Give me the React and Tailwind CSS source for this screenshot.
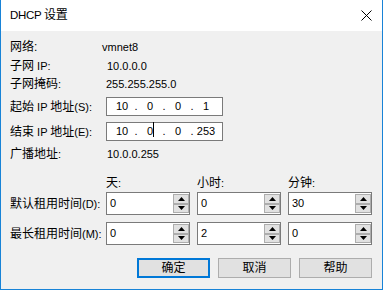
import React from "react";

const Z = ({ children }) => <span className="text-[12px]">{children}</span>;

function Info({ label, value, valueClass = "" }) {
  return (
    <div className="flex items-center h-[18px]">
      <div className="w-[96px] shrink-0">{label}</div>
      <div className={valueClass}>{value}</div>
    </div>
  );
}

function IpBox({ parts, cursor }) {
  return (
    <div className="flex items-center h-[19px] w-[117px] border border-[#7a7a7a] bg-white pl-[5px]">
      {parts.map((p, i) => (
        <React.Fragment key={i}>
          <div className="w-[20px] text-center relative">
            {p}
            {cursor && i === 1 && (
              <span className="absolute left-[13px] top-[-1px] w-[1px] h-[15px] bg-black" />
            )}
          </div>
          {i < 3 && <div className="w-[8px] text-center">.</div>}
        </React.Fragment>
      ))}
    </div>
  );
}

function Tri({ up }) {
  return (
    <svg width="7" height="4" viewBox="0 0 7 4">
      {up ? <path d="M3.5 0 L7 4 L0 4 Z" fill="#000" /> : <path d="M0 0 L7 0 L3.5 4 Z" fill="#000" />}
    </svg>
  );
}

function Spin({ value }) {
  return (
    <div className="flex w-[84px] h-[23px] border border-[#7a7a7a] bg-white">
      <div className="flex-1 flex items-center pl-[3px]">{value}</div>
      <div className="w-[16px] flex flex-col py-[1px] pr-[0px] gap-0">
        <div className="h-[10px] bg-[#e1e1e1] border border-[#adadad] flex items-center justify-center">
          <Tri up />
        </div>
        <div className="h-[10px] bg-[#e1e1e1] border border-[#adadad] flex items-center justify-center">
          <Tri />
        </div>
      </div>
    </div>
  );
}

function Btn({ children, def }) {
  return (
    <div
      className={
        "w-[73px] h-[20px] flex items-center justify-center bg-[#e1e1e1] " +
        (def ? "border-2 border-[#0078d7]" : "border border-[#adadad]")
      }
    >
      <Z>{children}</Z>
    </div>
  );
}

export default function App() {
  return (
    <div className="w-[383px] h-[290px] flex flex-col bg-[#f0f0f0] border-x border-b border-[#1883d7] text-black text-[11px] font-['Liberation_Sans','Noto_Sans_CJK_SC',sans-serif] overflow-hidden">
      <div className="h-[31px] bg-white flex items-center justify-between pl-[9px] pr-[10px] shrink-0">
        <div className="text-[11.5px] tracking-[-0.3px]">
          DHCP <Z>设置</Z>
        </div>
        <svg width="11" height="11" viewBox="0 0 11 11" className="mb-[1px]">
          <path d="M0.5 0.5 L10.5 10.5 M10.5 0.5 L0.5 10.5" stroke="#000" strokeWidth="1" />
        </svg>
      </div>
      <div className="flex-1 flex flex-col pl-[9px] pr-[10px] pt-[7px]">
        <Info label={<Z>网络:</Z>} value="vmnet8" valueClass="-ml-[4px]" />
        <div className="mt-[1px]">
          <Info label={<><Z>子网</Z> IP:</>} value="10.0.0.0" valueClass="ml-[1px]" />
        </div>
        <Info label={<><Z>子网掩码</Z>:</>} value="255.255.255.0" />
        <div className="flex items-center h-[19px] mt-[4px]">
          <div className="w-[96px] shrink-0">
            <Z>起始</Z> IP <Z>地址</Z>(S):
          </div>
          <IpBox parts={["10", "0", "0", "1"]} />
        </div>
        <div className="flex items-center h-[19px] mt-[6px]">
          <div className="w-[96px] shrink-0">
            <Z>结束</Z> IP <Z>地址</Z>(E):
          </div>
          <IpBox parts={["10", "0", "0", "253"]} cursor />
        </div>
        <div className="mt-[4px]">
          <Info label={<><Z>广播地址</Z>:</>} value="10.0.0.255" valueClass="ml-[1px]" />
        </div>

        <div className="flex items-center h-[18px] mt-[11px]">
          <div className="w-[96px] shrink-0" />
          <div className="flex gap-[7px]">
            <div className="w-[84px]"><Z>天</Z>:</div>
            <div className="w-[84px]"><Z>小时</Z>:</div>
            <div className="w-[84px]"><Z>分钟</Z>:</div>
          </div>
        </div>
        <div className="flex items-center">
          <div className="w-[96px] shrink-0">
            <Z>默认租用时间</Z>(D):
          </div>
          <div className="flex gap-[7px]">
            <Spin value="0" />
            <Spin value="0" />
            <Spin value="30" />
          </div>
        </div>
        <div className="flex items-center mt-[7px]">
          <div className="w-[96px] shrink-0">
            <Z>最长租用时间</Z>(M):
          </div>
          <div className="flex gap-[7px]">
            <Spin value="0" />
            <Spin value="2" />
            <Spin value="0" />
          </div>
        </div>
        <div className="flex justify-end gap-[8px] mt-[13px]">
          <Btn def>确定</Btn>
          <Btn>取消</Btn>
          <Btn>帮助</Btn>
        </div>
      </div>
    </div>
  );
}
